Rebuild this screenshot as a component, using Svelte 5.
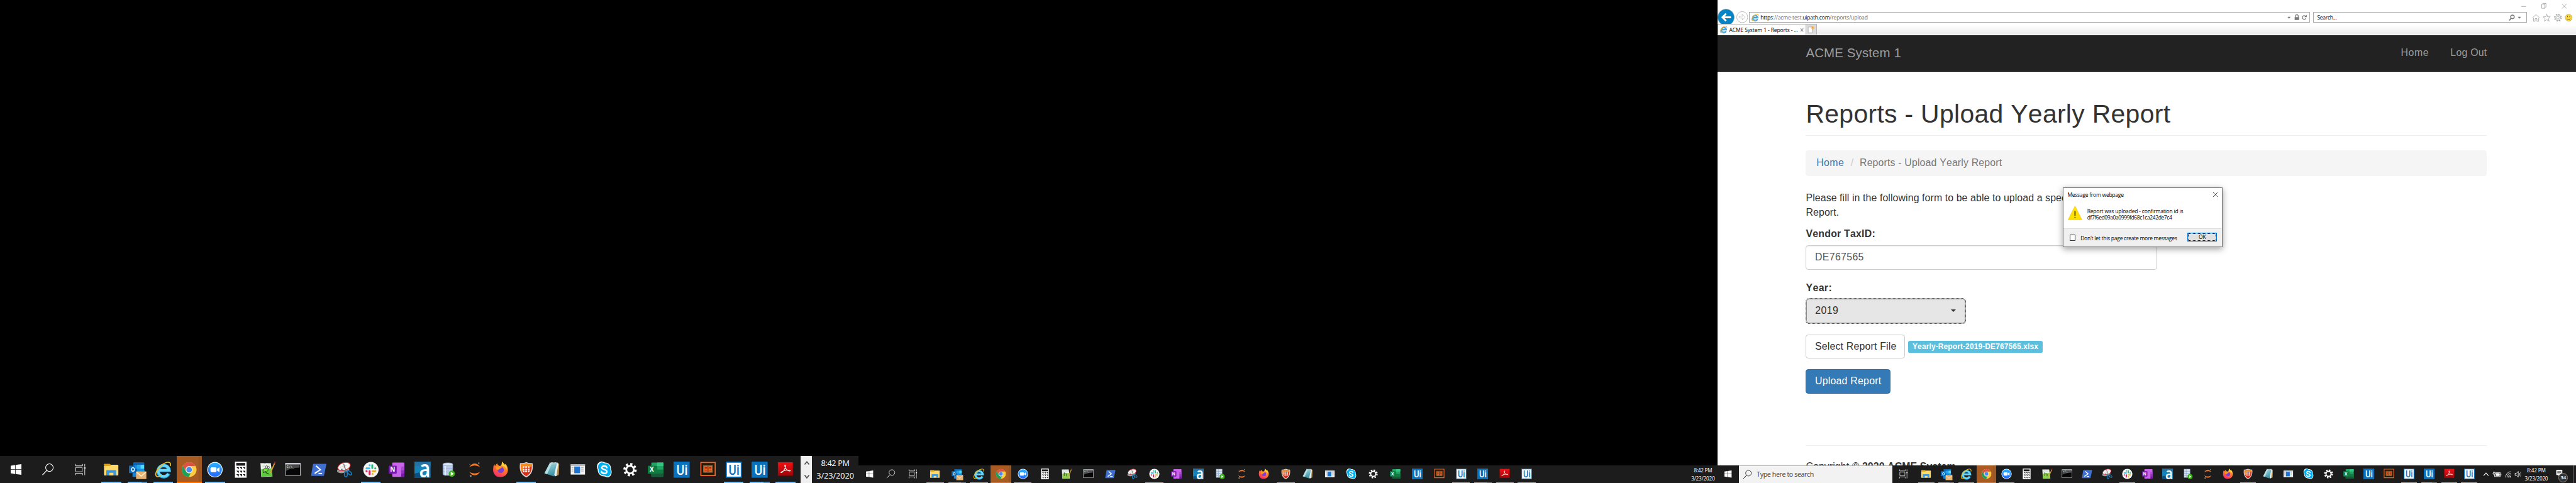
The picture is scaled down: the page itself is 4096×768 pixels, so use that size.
<script>
  const apps = [
    'folder', 'outlook', 'ie', 'chrome', 'zoom', 'calc', 'npp', 'cmd', 'ps', 'snip', 'slack', 'onenote',
    'alpha', 'db', 'jupyter', 'firefox', 'shield', 'notepad', 'window', 'skype', 'gear', 'excel',
    'ui', 'book', 'uiw', 'ui', 'acrobat', 'uiw'
  ];
  const open = [0, 1, 2, 4, 10, 16, 24, 25, 26, 27];
  const stacked = [1, 25];
  const keys = [0, 1, 2];

  // Spreads the letters of a label over a fixed width.
  function fit(node, width) {
    const desk = node.closest('.desk');
    const k = desk.getBoundingClientRect().width / 5760;
    const range = document.createRange();
    range.selectNodeContents(node);
    const natural = range.getBoundingClientRect().width / k;
    const gaps = node.textContent.trim().length - 1;
    node.style.letterSpacing = (width - natural) / gaps + 'px';
  }
</script>

{#snippet icon(name, small)}
  <svg class="ico" viewBox="0 0 36 36">
    {#if name === 'win'}
      <path fill="#fff" d="M0 5.2 14.8 3v14.3H0zM16.4 2.8 36 0v17.3H16.4zM0 18.8h14.8V33L0 30.8zM16.4 18.8H36V36l-19.600-2.800z" />
    {:else if name === 'search'}
      <circle cx="21.500" cy="13.500" r="9.500" fill="none" stroke="currentColor" stroke-width="1.700" />
      <path d="M15 20.500 4 32" stroke="currentColor" stroke-width="1.900" />
    {:else if name === 'taskview'}
      <g fill="none" stroke="#fff" stroke-width="1.500">
        <path d="M5 3v5h19V3M5 33v-5h19v5M6 12h17v12H6zM30 3v7M30 17v16" />
        <path d="M28 14h4" stroke-width="4" />
      </g>
    {:else if name === 'folder'}
      <path fill="#e0a31a" d="M2 6q0-1 1-1h12l3 3-3 3H2z" />
      <path fill="#ffd969" d="M2 10h13l3-3h15q1 0 1 1v22q0 1-1 1H3q-1 0-1-1z" />
      <path fill="#3d97dd" d="M7 31V20q0-1 1-1h20q1 0 1 1v11h-6v-6h-9v6z" />
    {:else if name === 'outlook'}
      <rect x="10" y="2" width="24" height="23" rx="1" fill="#1490df" />
      <path fill="#0f63ae" d="M10 2h24v6H10z" /><path fill="#28a8ea" d="M18 7h8v9h-8z" /><path fill="#50d9ff" d="M26 7h8v9h-8z" />
      <path fill="#0b5ba5" d="M10 16h8v9h-8z" /><path fill="#1483d8" d="M8 25h9v9H9q-1 0-1-1zM34 19l2 1v4h-2z" />
      <rect y="9" width="14" height="16.500" rx="1" fill="#0f6cbd" />
      <ellipse cx="9" cy="17.500" rx="3.300" ry="4" fill="none" stroke="#fff" stroke-width="2" />
      <path fill="#e8b370" d="M16 22h23v17H16z" /><path d="m17 23.500 10.500 9 10.500-9" fill="none" stroke="#fff4e0" stroke-width="1.800" />
    {:else if name === 'ie'}
      <path fill="none" stroke="#1b9be0" stroke-width="7.500" d="M30 26.500a12.500 12.500 0 1 1 1-7H9" />
      <path fill="none" stroke="#6bd7fa" stroke-width="5.500" d="M29 27.500a12.300 12.300 0 1 1 2-8H9" />
      <path fill="none" stroke="#f4bf17" stroke-width="2.300" d="M33.500 10C37-1 25-1 14 8 2 18-3 31 4 33.500c3 1 6-1 8-2.500" />
    {:else if name === 'iepage'}
      <path fill="none" stroke="#2a86cf" stroke-width="7.500" d="M30 26.500a12.500 12.500 0 1 1 1-7H9" />
      <path fill="none" stroke="#5fb4ea" stroke-width="4" d="M29 27.500a12.300 12.300 0 1 1 2-8H9" />
      <path fill="none" stroke="#f2b91c" stroke-width="3.300" d="M33.500 10C37-1 25-1 14 8 2 18-3 31 4 33.500c3 1 6-1 8-2.500" />
    {:else if name === 'chrome'}
      <circle cx="18" cy="18" r="16.500" fill="#ffcd40" />
      <path fill="#de5246" d="M3.700 9.800a16.500 16.500 0 0 1 28.600 0H18a8 8 0 0 0-7.300 12z" />
      <path fill="#1aa15f" d="M3.700 9.800 11 22a8 8 0 0 0 10.500 3.600L17 34.500A16.500 16.500 0 0 1 3.700 9.800z" />
      <circle cx="18" cy="18" r="7.700" fill="#f4f4f4" /><circle cx="18" cy="18" r="6.200" fill="#4a8af4" />
    {:else if name === 'zoom'}
      <circle cx="18" cy="18" r="17.200" fill="#fff" /><circle cx="18" cy="18" r="15.600" fill="url(#g-zoom)" />
      <rect x="8" y="12.500" width="13.500" height="11" rx="2.500" fill="#fff" /><path fill="#fff" d="m22.500 16 5.500-3.500v11L22.500 20z" />
    {:else if name === 'calc'}
      <path fill="#fff" d="M5 0h26v36H5z" /><path fill="#1b1b1b" d="M8 3h20v6H8z" />
      {#each keys as r}
        {#each keys as c}
          <path fill="#111" d="M{8 + c * 7.200} {12.300 + r * 8}h5.600v5z" />
        {/each}
      {/each}
    {:else if name === 'npp'}
      <path fill="#eef3ea" d="M3 3h23l4 30-25 1.500z" /><path fill={small ? '#8fd14a' : '#5ecb3c'} d="M4.500 17 27 15l2.500 17.500L5 34z" />
      <path d="M5 4h21" stroke="#888" stroke-width="2" stroke-dasharray="1.500 1.500" />
      <path d="M6 8h18M6 11h19" stroke="#b9c7cf" />
      {#if small}
        <path d="M11 13v12M11 18h8M19 18v8" stroke="#294417" stroke-width="2" fill="none" />
      {:else}
        <path fill="#7be04a" stroke="#1c3a12" stroke-width="1.200" d="M9 18c4-6 12-3 11 1s-9 6-11 3z" />
        <circle cx="17" cy="12" r="2.600" fill="#fff" stroke="#222" /><circle cx="21" cy="13" r="2" fill="#fff" stroke="#222" />
        <path d="m9 25 5-3 2 3 6 3" stroke="#16380d" stroke-width="1.500" fill="none" />
      {/if}
      <path d="M35 3 25 26" stroke="#e0a22c" stroke-width="2.600" /><path d="m36 0-2 4.500" stroke="#a4281c" stroke-width="2.400" />
    {:else if name === 'cmd'}
      <rect x="1.500" y="4" width="33" height="27" fill="#060606" stroke="#b5b8bd" stroke-width="1.500" />
      <path fill="#c9ccd2" d="M1 3h34v3.500H1z" /><path fill="#4c4c4c" d="M3 7.500h30v6C18 14 8 17 3 21z" />
      <text x="4" y="13.500" class="cmdtext">C:\_</text>
    {:else if name === 'ps'}
      <path fill="#3f6fd0" d="M7 5h27q1.500 0 1 1.500L30 30.500q-.4 1.500-2 1.500H2q-1.500 0-1-1.500L5 6.500Q5.400 5 7 5z" />
      <path d="m12 9.500 9.500 8.500L9 26.500" fill="none" stroke="#fff" stroke-width="3" /><path d="M17.500 26.500h8" stroke="#fff" stroke-width="2.600" />
    {:else if name === 'snip'}
      <ellipse cx="15" cy="19" rx="14" ry="6.500" transform="rotate(-10 15 19)" fill="#9d9d9d" />
      <ellipse cx="17" cy="11" rx="14.500" ry="8.500" transform="rotate(-18 17 11)" fill="#f6f6f6" stroke="#d8242c" stroke-width="1.600" />
      <path d="M8 13l15-5M10 16l12-4" stroke="#bbb" /><path d="m16 5 6 18M10 17l12 5" stroke="#777" stroke-width="2" />
      <ellipse cx="21" cy="28" rx="3.300" ry="6" fill="none" stroke="#1c7cbc" stroke-width="2.400" /><ellipse cx="29" cy="25" rx="3" ry="6" transform="rotate(-45 29 25)" fill="none" stroke="#1c7cbc" stroke-width="2.400" />
    {:else if name === 'slack'}
      <circle cx="18" cy="18" r="17.200" fill="#f5f5f3" />
      <g fill="none" stroke-width="4.200" stroke-linecap="round">
        <path stroke="#36c5f0" d="M8 15h6.500M15 8v.5" /><path stroke="#2eb67d" d="M21 8v6.500M28 15h-.5" />
        <path stroke="#ecb22e" d="M21.500 21.500H28M21.500 28v-.5" /><path stroke="#e01e5a" d="M15 21.500V28M8 21.500h.5" />
      </g>
    {:else if name === 'onenote'}
      <rect x="8" y="2" width="27" height="32" rx="1.500" fill="#ca64ea" />
      <path fill="#ae4bd5" d="M28 11h7v8h-7z" /><path fill="#9332bf" d="M28 19h7v7h-7z" /><path fill="#7719aa" d="M28 26h7v8h-7z" />
      <rect y="9" width="18" height="18" rx="1.500" fill="#7719aa" /><text x="9" y="22.500" class="letter n">N</text>
    {:else if name === 'alpha'}
      <path fill="#1583b8" d="M0 0h36v36H0z" /><path fill="#2573a4" d="M0 0h36v10H0z" /><path fill="#0b4f80" d="M0 27q10-5 18 0v9H0z" />
      <text x="10.500" y="35.300" class="letter a" textLength="25" lengthAdjust="spacingAndGlyphs">a</text>
    {:else if name === 'db'}
      {#if small}
        <path fill="#dce6f5" stroke="#8fa5c8" d="M6 2h20v28H6z" /><path d="M6 9h20M6 16h20M6 23h20M13 2v28" stroke="#7f9cc9" stroke-width="1.500" />
      {:else}
        <path fill="#b9cbea" stroke="#8095bd" d="M6 6v22c0 4 22 4 22 0V6" /><ellipse cx="17" cy="6" rx="11" ry="3.300" fill="#e2eaf7" stroke="#8da2c8" />
        <path d="M6 14c2 3 20 3 22 0M6 21c2 3 20 3 22 0" stroke="#8095bd" fill="none" /><path d="M11 10v21" stroke="#e6eefa" stroke-width="3" />
      {/if}
      <circle cx="26" cy="27" r={small ? 8.500 : 7} fill="#37b312" /><path fill="#fff" d="m23.500 22.500 7 4.500-7 4.500z" />
    {:else if name === 'jupyter'}
      <path fill="#f37726" d="M6 12.500C12 1.500 24 1.500 30 12.500 23 7.500 13 7.500 6 12.500zM6 22.500C12 33.500 24 33.500 30 22.500 23 27.500 13 27.500 6 22.500z" />
      <circle cx="27" cy="3.500" r="1.800" fill="#7b7b7b" /><circle cx="9" cy="32" r="2.200" fill="#8d8d8d" /><circle cx="7" cy="6" r="1" fill="#6a6a6a" />
    {:else if name === 'firefox'}
      <path fill="url(#g-fox)" d="M22 0c3 4 4 6 6 7l1-2c9 9 8 29-11 29.500C4 35 0 23 2 13c0-3 1-5 3-7 0 2 0 3 1 4 2-4 3-4 5-6 0 3 2 5 6 6 4-2 5-6 5-10z" />
      <path fill="#ffcf3a" d="M22 0c5 8 12 9 11 20-1-6-5-9-9-10s-4-5-2-10z" />
      <circle cx="18.500" cy="18.500" r="7" fill="#7a3fd8" /><path fill="#ff9a20" d="M8 12c5-3 9 0 13 0-1 4-6 3-8 7-3 0-6-4-5-7z" />
    {:else if name === 'shield'}
      <path fill="#d8dadc" d="M18 1c5 2 10 2.500 14 2.500C34 18 31 29 18 35.500 5 29 2 18 4 3.500 8 3.500 13 3 18 1z" />
      <path fill="#d92b16" d="M18 3.500c4 1.700 8 2.200 12 2.300C31 18 29 27 18 32.800 7 27 5 18 6 5.800c4-.1 8-.6 12-2.300z" />
      <path fill="#f58a1f" d="M18 3.500c4 1.700 8 2.200 12 2.300v5C22 13 12 19 7 22 5.600 17 5.600 11 6 5.800c4-.1 8-.6 12-2.300z" />
      <rect x="10" y="10.500" width="15.500" height="13" rx="2" fill="#fff" /><path d="M14.800 10.500v13M20.300 10.500v13M10 14.500h15.500M10 19h15.500" stroke="#d5391c" stroke-width="1.600" />
    {:else if name === 'notepad'}
      <path fill="#b98a45" d="m29 4 5 1-1 25-6 2z" /><path fill="#e8f2f4" d="M14 3h18l-4 29-4 1z" />
      <path fill="url(#g-note)" d="M13 3h16l-7 30L1 26z" /><path fill="#b4dfe4" d="M13 3h5L7 28l-6-2z" /><path d="M13 2.500h18" stroke="#dfe7ea" stroke-width="2" stroke-dasharray="1.500 1" />
    {:else if name === 'window'}
      <path fill="#f2f2f2" d="M2 6h32v23H2z" /><path fill="#a9adb2" d="M2 6h32v3.500H2z" /><path fill="#1b74d4" d="M10 11h13v15H10z" />
      <path d="M4 13h4M4 17h4M4 21h4M25 13h6M25 17h6M25 21h6" stroke="#a5a5a5" stroke-width="1.500" />
    {:else if name === 'skype'}
      <path fill="#fff" d="M10 0c5-1 7 2 10 2 9 0 14 8 13 15 3 5 2 16-6 18-4 1-6-2-9-2C8 33 3 25 3.500 18 0 11 2 2 10 0z" />
      <path fill="#00aff0" d="M11 2c4-1 6 2 9 2 8 0 12.500 7 11.500 14 2.500 5 1 13.500-5 15-3 .8-5-2-8-2C9 31 4.500 24 5.500 17.500 2.500 12 4.500 4 11 2z" />
      <path d="M24 13.500C22 8 12 9 12.500 14c.5 4.500 11 3 11.500 8 .5 5.500-11 6-12.500 0" fill="none" stroke="#fff" stroke-width="3.400" stroke-linecap="round" />
    {:else if name === 'gear'}
      <circle cx="18" cy="18" r="12.500" fill="none" stroke="#fff" stroke-width="5" stroke-dasharray="4.910" />
      <circle cx="18" cy="18" r="8.500" fill="none" stroke="#fff" stroke-width="4" />
    {:else if name === 'excel'}
      <rect x="8" y="2" width="27" height="32" rx="1.500" fill="#21a366" /><path fill="#33c481" d="M21 2h14v8H21z" />
      <path fill="#107c41" d="M8 10h13v16H8zM21 18h14v8H21z" /><path fill="#185c37" d="M8 26h27v8H8z" />
      <rect y="9" width="18" height="18" rx="1.500" fill="#107c41" /><text x="9" y="22.500" class="letter n">X</text>
    {:else if name === 'ui'}
      <path fill="#0a71bd" d="M0 0h36v36H0z" /><text x="6.500" y="29.500" class="letter u" textLength="25" lengthAdjust="spacingAndGlyphs">Ui</text>
    {:else if name === 'uiw'}
      <path fill="#0a71bd" d="M0 0h36v36H0z" /><path fill="#fff" d="M2.500 2.500h31v31h-31z" /><text x="6.500" y="29.500" class="letter u blue" textLength="24" lengthAdjust="spacingAndGlyphs">Ui</text>
    {:else if name === 'book'}
      <path fill="#241704" stroke="#f26522" stroke-width="2.400" d="M2 2h32v29H2z" /><path fill="none" stroke="#e9c9a5" stroke-width=".8" d="M8 9h20v15H8z" />
      <path fill="#f26522" d="M9 10h8.500v13H9zM18.700 10h8.300v13h-8.300z" /><path d="M11 13h5M11 16h5M11 19h5M20.500 13h5M20.500 16h5M20.500 19h5" stroke="#241704" />
    {:else if name === 'acrobat'}
      <path fill="#7e0606" d="M1 1h34v31H1z" /><path fill="url(#g-pdf)" d="M1.500 1.500h33V31h-33z" />
      <path d="M9 24.500c4-1 9-9 9.500-15 0-3-2.500-2-2 0C17 14 22 21 28 21c2-.5 1-2-1-2-6 0-14 1.500-18 4-1.500 1-1.500 2 0 1.500z" fill="none" stroke="#fff" stroke-width="1.500" />
    {/if}
  </svg>
{/snippet}

{#snippet clock(a, b)}
  <div class="clock"><span use:fit={a}>8:42 PM</span><span use:fit={b}>3/23/2020</span></div>
{/snippet}

{#snippet appList(count, small)}
  <div class="apps">
    {#each apps.slice(0, count) as name, i}
      <div class="cell" class:hot={name === 'chrome'} class:open={open.includes(i)} class:stack={stacked.includes(i)}>
        {@render icon(name, small)}
      </div>
    {/each}
  </div>
{/snippet}

<svg class="defs" width="0" height="0">
  <linearGradient id="g-zoom" x2="0" y2="1"><stop stop-color="#2bb1ff" /><stop offset="1" stop-color="#2468ff" /></linearGradient>
  <linearGradient id="g-fox" x1=".8" y1="0" x2=".3" y2="1"><stop stop-color="#ffd53a" /><stop offset=".45" stop-color="#ff7a26" /><stop offset="1" stop-color="#f52a6b" /></linearGradient>
  <linearGradient id="g-note" x2=".3" y2="1"><stop stop-color="#a9dbe2" /><stop offset="1" stop-color="#3d93a5" /></linearGradient>
  <linearGradient id="g-pdf" x2="0" y2="1"><stop stop-color="#f40f12" /><stop offset="1" stop-color="#a00509" /></linearGradient>
</svg>

<div class="desk">
  <section class="screen">
    <div class="taskbar big">
      <div class="sys start">{@render icon('win')}</div>
      <div class="sys find">{@render icon('search')}</div>
      <div class="sys view">{@render icon('taskview')}</div>
      {@render appList(27, false)}
      <div class="scroller">
        <svg viewBox="0 0 26 60"><path d="m9 19 5-6 5 6M9 43l5 6 5-6" fill="none" stroke="#505050" stroke-width="2.400" /></svg>
      </div>
      {@render clock(64, 84)}
    </div>
  </section>

  <section class="screen">
    <div class="taskbar mid">
      <div class="sys start">{@render icon('win')}</div>
      <div class="sys find">{@render icon('search')}</div>
      <div class="sys view">{@render icon('taskview')}</div>
      {@render appList(28, true)}
      {@render clock(41, 53)}
    </div>
  </section>

  <section class="screen">
    <div class="browser">
      <div class="caption">
        <svg viewBox="0 0 110 20" fill="none" stroke="#8a8a8a">
          <path d="M3 14.500h10M48.500 9.500h7v9h-7zM51 9V7.500h7V16h-2M94 9l10 10M104 9 94 19" />
        </svg>
      </div>
      <div class="toolbar">
        <div class="back">
          <svg viewBox="0 0 38 38"><circle cx="19" cy="19" r="18.300" fill="#0484c6" stroke="#8b9aa5" /><path d="M30 19H12M19 11l-8 8 8 8" fill="none" stroke="#fff" stroke-width="4" /></svg>
        </div>
        <svg class="fwd" viewBox="0 0 26 26" fill="none" stroke="#b5b5b5"><circle cx="13" cy="13" r="12.300" stroke-width="1.300" /><path d="M6 11h7V6.500l7 6.500-7 6.500V15H6z" /></svg>
        <div class="field address">
          <span class="fav">{@render icon('iepage')}</span>
          <span class="url" use:fit={240}>https<i>://acme-test.</i>uipath.com<i>/reports/upload</i></span>
          <svg class="tools" viewBox="0 0 54 24">
            <path fill="#777" d="M6 11h7l-3.500 4zM22 11.500h10V18H22z" /><path d="M24 12V9.500a3 3.500 0 0 1 6 0V12M46.500 10a4 4 0 1 0 .5 4" fill="none" stroke="#777" stroke-width="1.800" /><path fill="#777" d="M44 11.500h5V6z" />
          </svg>
        </div>
        <div class="field query">
          <span use:fit={44}>Search...</span>
          <svg class="tools" viewBox="0 0 44 24"><circle cx="14" cy="11" r="4" fill="none" stroke="#777" stroke-width="2" /><path d="m11 14-4 5" stroke="#777" stroke-width="2.500" /><path fill="#777" d="M26 11h7l-3.500 4z" /></svg>
        </div>
        <svg class="chrome-icons" viewBox="0 0 96 20" fill="none" stroke="#969696">
          <path d="M1.500 10 9 3l7.500 7-1.500 1v7h-4v-6H7v6H3.500v-7z" />
          <path d="m33 2 2 6h6l-4.500 4 2 6-5.500-3.500-5.500 3.500 2-6L25 8h6z" />
          <circle cx="58" cy="10" r="3" /><circle cx="58" cy="10" r="6" /><circle cx="58" cy="10" r="7.500" stroke-dasharray="3 2.890" stroke-width="1.800" />
          <circle cx="82" cy="10" r="7.700" fill="#ffd83c" stroke="#b9a04a" /><path d="M79.500 5.500V9M84.500 5.500V9M78 12.500q4 4 8 0" stroke="#75642a" stroke-width="1.400" />
        </svg>
      </div>
      <div class="tabs">
        <div class="tab">
          <span class="fav">{@render icon('iepage')}</span>
          <span use:fit={154}>ACME System 1 - Reports - ...</span>
          <svg class="tabx" viewBox="0 0 10 10"><path d="m1.500 1.500 6 7M7.500 1.500l-6 7" stroke="#999" stroke-width="1.800" /></svg>
        </div>
        <div class="newtab">
          <svg viewBox="0 0 22 22"><path d="M4.500 5.500h9v13h-9z" fill="#fff" stroke="#a5a5a5" /><path d="M14.500 3v8M10.500 7h8M12 4.500l5 5M17 4.500l-5 5" stroke="#f3a12a" stroke-width="1.200" /></svg>
        </div>
      </div>

      <div class="page">
        <nav>
          <span class="brand" use:fit={213}>ACME System 1</span>
          <span class="links"><span use:fit={62}>Home</span><span use:fit={81.5}>Log Out</span></span>
        </nav>
        <main>
          <h1><span use:fit={815}>Reports - Upload Yearly Report</span></h1>
          <div class="crumbs"><a href="#home" use:fit={61.5}>Home</a><b>/</b><span use:fit={318}>Reports - Upload Yearly Report</span></div>
          <div class="form">
            <p>Please fill in the following form to be able to upload a specific<br />Report.</p>
            <div class="label"><span use:fit={155}>Vendor TaxID:</span></div>
            <div class="input"><span use:fit={109}>DE767565</span></div>
            <div class="label year"><span use:fit={58}>Year:</span></div>
            <div class="select"><span use:fit={51.5}>2019</span><i class="caret"></i></div>
            <div class="row"><span class="btn pick"><span use:fit={182}>Select Report File</span></span><span class="tag"><span use:fit={281}>Yearly-Report-2019-DE767565.xlsx</span></span></div>
            <div class="btn primary"><span use:fit={148}>Upload Report</span></div>
          </div>
          <footer>Copyright © <b>2020 ACME System</b></footer>
        </main>
      </div>

      <div class="dialog">
        <div class="dtop">
          <div class="dtitle">
            <span use:fit={126}>Message from webpage</span>
            <svg viewBox="0 0 10 10"><path d="m0 0 10 10M10 0 0 10" stroke="#000" stroke-width="1.100" /></svg>
          </div>
          <div class="dbody">
            <svg viewBox="0 0 32 32"><path d="M16 .8 31.500 31.500H.5z" fill="#ffe100" stroke="#fcbf2d" /><path d="M16 12v11M16 25.500v2.500" stroke="#000" stroke-width="2" /></svg>
            <div class="msg"><span use:fit={215}>Report was uploaded - confirmation id is</span><span use:fit={190}>df7f6ed09a0a0999fd68c1ca242de7c4</span></div>
          </div>
        </div>
        <div class="dfoot">
          <i class="check"></i>
          <span class="dlabel" use:fit={216}>Don't let this page create more messages</span>
          <div class="ok"><span>OK</span></div>
        </div>
      </div>
    </div>

    <div class="taskbar right">
      <div class="sys start">{@render icon('win')}</div>
      <div class="searchbox">{@render icon('search')}<span use:fit={128}>Type here to search</span></div>
      <div class="sys view">{@render icon('taskview')}</div>
      {@render appList(28, true)}
      <svg class="tray" viewBox="0 0 94 40" fill="none" stroke="#fff" stroke-width="1.200">
        <path d="m8.500 23 5.500-6 5.500 6" stroke-width="1.500" />
        <path d="M35 16h11v9H33v-4M30.500 14v3M33.500 14v3M29.500 17h5v2l-2.500 2-2.500-2zM47.500 19v3" /><path fill="#fff" d="M36 18h8v5h-8z" />
        <path d="M58 27a12 12 0 0 1 11-13M61 27a9 9 0 0 1 8-9.500M64 27a6 6 0 0 1 5-6" /><circle cx="68" cy="25.500" r="1" fill="#fff" />
        <path d="M79 17.500h3l4-4v13l-4-4h-3zM88.500 17q2 3 0 6" /><path d="M90.500 15q3 5 0 10" stroke="#999" />
      </svg>
      {@render clock(42, 52)}
      <div class="notes">
        <svg viewBox="0 0 20 20"><path fill="#fff" d="M1 2h15v13H8l-3 3v-3H1z" /><path d="M3.500 6h10M3.500 9h10M3.500 12h6" stroke="#1b1b1b" /></svg>
        <span class="badge">34</span>
      </div>
    </div>
  </section>
</div>

<style>
  :global(body) { margin: 0; background: #000; overflow: hidden; }
  .defs { position: absolute; }
  .desk {
    zoom: 0.711111;
    width: 5760px;
    height: 1080px;
    display: grid;
    grid-template-columns: repeat(3, 1920px);
    background: #000;
    overflow: hidden;
    font-family: "Open Sans", "Noto Sans", sans-serif;
    white-space: nowrap;
  }
  .screen { height: 1080px; display: flex; flex-direction: column; justify-content: flex-end; overflow: hidden; }

  .ico { display: block; width: var(--ico); height: var(--ico); overflow: visible; }
  .letter { font-family: "Open Sans", sans-serif; fill: #fff; font-weight: 700; }
  .n { font-size: 14px; text-anchor: middle; }
  .a { font-size: 54px; font-weight: 600; }
  .u { font-family: Roboto, sans-serif; font-size: 31px; font-weight: 500; }
  .blue { fill: #0a71bd; }
  .cmdtext { font: 7px "Liberation Mono", monospace; fill: #fff; }

  .taskbar { flex: none; display: flex; background: #1c1c1c; color: #fff; height: 40px; --ico: 24px; --line: 40px; --lh: 2px; --pitch: 49px; }
  .taskbar.big { height: 60px; --ico: 36px; --line: 44px; --lh: 3px; --pitch: 58px; }
  .taskbar.right { --pitch: 45px; --line: 36px; }
  .sys { display: flex; align-items: center; justify-content: center; }
  .big .start { width: 72px; --ico: 24px; }
  .big .find { width: 72px; --ico: 32px; }
  .big .view { width: 72px; padding-right: 4px; --ico: 30px; }
  .mid .start { width: 48px; --ico: 16px; }
  .mid .find { width: 48px; }
  .mid .view { width: 50.5px; }
  .right .start { width: 48px; --ico: 16px; }
  .right .view { width: 52.5px; box-sizing: border-box; padding-right: 5px; }

  .apps { display: flex; }
  .cell { width: var(--pitch); height: 100%; display: grid; place-items: center; align-content: center; position: relative; }
  .cell.open::after {
    content: ""; position: absolute; bottom: 0; left: calc(50% - var(--line) / 2);
    width: var(--line); height: var(--lh); background: #76b9ed;
  }
  .cell.stack::after { background: linear-gradient(90deg, #76b9ed 70%, #5a8fb9 70%); }
  .cell.hot::before { content: ""; position: absolute; inset: 0 1px; background: linear-gradient(90deg, #a85c24 88%, #8f4c1a 88%, #8f4c1a 91%, #a25821 91%); border-bottom: var(--lh) solid #ff7300; box-sizing: border-box; }
  .cell.hot > :global(svg) { position: relative; }

  .scroller { width: 26px; margin-left: 4px; background: #f0f0f0; }
  .scroller svg { display: block; width: 26px; height: 60px; }
  .clock { display: flex; flex-direction: column; align-items: center; justify-content: center; font-size: 11.5px; line-height: 18.5px; }
  .big .clock { width: 104px; font-size: 17.8px; line-height: 28px; }
  .mid .clock { margin-left: auto; width: 64px; }
  .right .clock { width: 62px; }

  .searchbox { width: 344px; box-sizing: border-box; background: #f2f2f2; border-top: 1px solid #b0b0b0; color: #404040; display: flex; align-items: center; gap: 8px; padding-left: 8px; font-size: 15px; }
  .searchbox .ico { color: #111; }
  .tray { width: 94px; height: 40px; margin-left: 0.500px; }
  .tray + :global(.clock) { margin-left: 2px; }
  .notes { position: relative; width: 52px; border-right: 1px solid #777; display: flex; align-items: center; padding: 0 0 4px 13px; box-sizing: border-box; }
  .notes svg { width: 18px; height: 20px; }
  .badge { position: absolute; left: 19px; top: 18px; width: 18px; height: 18px; border: 1px solid #888; border-radius: 50%; background: #333; font: 600 11px/18px "Open Sans", sans-serif; text-align: center; }

  .browser { position: relative; height: 1040px; background: #fff; color: #000; display: flex; flex-direction: column; font-size: 12px; overflow: hidden; }
  .caption { height: 24px; flex: none; display: flex; justify-content: flex-end; }
  .caption svg { width: 110px; height: 20px; margin-right: 15px; }
  .toolbar { height: 30px; flex: none; display: flex; align-items: center; padding-left: 1px; }
  .back { width: 38px; height: 34px; margin-top: -4px; overflow: hidden; flex: none; }
  .back svg { display: block; width: 38px; height: 38px; }
  .fwd { width: 26px; height: 26px; margin-left: 3px; flex: none; }
  .field { box-sizing: border-box; height: 24px; border: 1px solid #aaa; display: flex; align-items: center; }
  .address { width: 1254px; margin-left: 3px; padding-left: 4px; }
  .fav { --ico: 16px; width: 16px; margin-right: 4px; }
  .url i { font-style: normal; color: #6d6d6d; }
  .tools { height: 24px; margin-left: auto; flex: none; }
  .address .tools { width: 54px; }
  .query { width: 478px; margin-left: 7px; padding-left: 8px; }
  .query .tools { width: 44px; }
  .chrome-icons { width: 96px; height: 20px; margin-left: 12px; }
  .tabs { height: 23px; flex: none; display: flex; background: linear-gradient(#fff 10%, #ececec 90%); border-bottom: 1px solid #fff; }
  .tab { width: 199px; box-sizing: border-box; border: 1px solid #b5b5b5; border-bottom: 0; background: #fff; display: flex; align-items: center; padding-left: 5px; }
  .tabx { width: 10px; height: 10px; margin-left: 5px; }
  .newtab { width: 22px; background: #dcdcdc; border: 1px solid #b5b5b5; border-width: 1px 1px 0 0; }
  .newtab svg { display: block; width: 22px; height: 22px; }

  .page { flex: 1; min-height: 0; overflow: hidden; font: 22.4px/32px "Liberation Sans", Arial, sans-serif; font-kerning: none; color: #333; }
  nav { height: 81px; border-bottom: 2px solid #080808; background: #222; color: #9d9d9d; display: flex; align-items: center; justify-content: space-between; padding: 0 199px 0 198px; }
  .brand { font-size: 28.8px; }
  .links { display: flex; gap: 48px; }
  main { margin: 0 199px 0 198px; }
  h1 { margin: 63px 0 0; font-size: 57.6px; font-weight: 400; line-height: 64px; padding-bottom: 14px; border-bottom: 2px solid #eee; }
  .crumbs { margin-top: 33px; height: 58px; background: #f5f5f5; border-radius: 6px; display: flex; align-items: center; padding-left: 23.5px; color: #777; }
  .crumbs a { color: #337ab7; text-decoration: none; }
  .crumbs b { font-weight: 400; color: #ccc; padding: 0 14px 0 14.5px; }
  .form { width: 785px; }
  p { margin: 33.5px 0 0; letter-spacing: 0.12px; }
  .label { margin-top: 16.5px; font-weight: 700; }
  .input { margin-top: 8.6px; height: 54px; box-sizing: border-box; border: 2px solid #ccc; border-radius: 6px; box-shadow: inset 0 2px 2px rgba(0, 0, 0, 0.06); color: #555; line-height: 52px; padding-left: 19px; }
  .year { margin-top: 25.8px; }
  .select { margin: 7.6px 0 0 0.5px; width: 356px; height: 54.4px; box-sizing: border-box; border: 2px solid #8c8c8c; border-radius: 6px; background: #e6e6e6; outline: 1.5px dotted #222; display: flex; align-items: center; justify-content: space-between; padding: 0 19px; }
  .caret { border: 6.500px solid transparent; border-top-color: #333; border-bottom: 0; }
  .row { display: flex; align-items: center; margin-top: 25.2px; gap: 7px; }
  .btn { box-sizing: border-box; height: 54px; border: 2px solid #ccc; border-radius: 6px; padding: 0 19px; line-height: 51px; }
  .pick { width: 222px; }
  .tag { box-sizing: border-box; width: 300px; background: #5bc0de; color: #fff; font-size: 16.8px; font-weight: 700; height: 28px; line-height: 26px; border-radius: 4px; padding: 0 9.500px; margin-top: 2px; }
  .primary { display: block; width: 189px; height: 55px; margin-top: 24.4px; background: #337ab7; border-color: #2e6da4; color: #fff; }
  footer { margin-top: 114px; border-top: 2px solid #eee; padding-top: 31.5px; letter-spacing: 0.1px; }

  .dialog { position: absolute; left: 773px; top: 419px; width: 357px; height: 133px; box-sizing: border-box; border: 1px solid #6b6b6b; background: #fff; box-shadow: 0 4px 14px rgba(0, 0, 0, 0.38); display: flex; flex-direction: column; }
  .dtop { height: 90px; }
  .dtitle { height: 30px; display: flex; align-items: center; justify-content: space-between; padding: 0 10px 0 8.500px; }
  .dtitle svg { width: 10px; height: 10px; }
  .dbody { display: flex; padding: 10px 0 0 10px; gap: 10.500px; }
  .dbody svg { width: 32px; height: 32px; }
  .msg { display: flex; flex-direction: column; align-items: flex-start; line-height: 15px; padding-top: 4.5px; }
  .dfoot { flex: 1; background: #f0f0f0; border-top: 1px solid #dfdfdf; display: flex; align-items: center; }
  .check { width: 11px; height: 11px; border: 1px solid #333; background: #fff; margin: 0 11px 0 13px; }
  .dlabel { padding-top: 2px; }
  .ok { margin: 0 11px 2px auto; width: 66px; height: 21px; box-sizing: border-box; border: 2px solid #0078d7; background: #e1e1e1; }
  .ok span { display: block; height: 15px; line-height: 14px; text-align: center; border: 1px dotted #000; }
</style>
